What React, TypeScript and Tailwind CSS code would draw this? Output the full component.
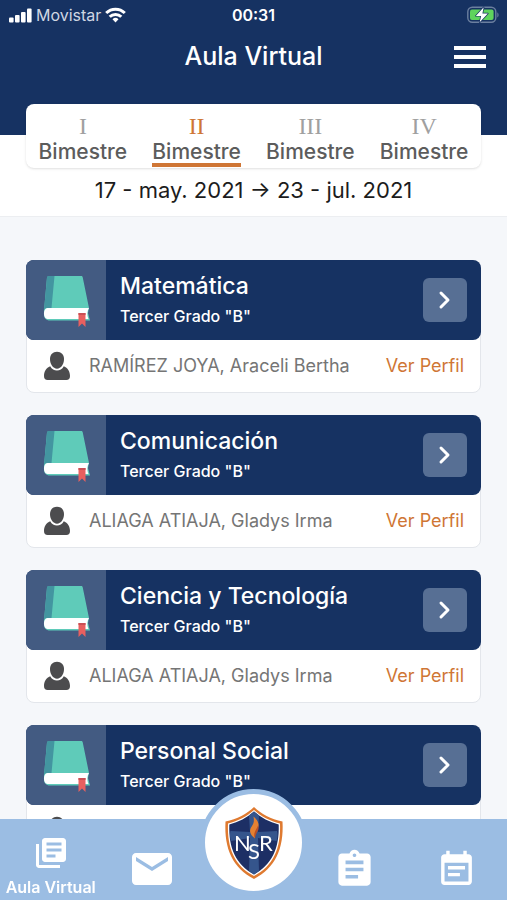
import { useState } from "react"
import { MdAssignment, MdEmail, MdEventNote, MdLibraryBooks } from "react-icons/md"

const periods = ["I", "II", "III", "IV"]

const courses = [
  { name: "Matemática", grade: 'Tercer Grado "B"', teacher: "RAMÍREZ JOYA, Araceli Bertha" },
  { name: "Comunicación", grade: 'Tercer Grado "B"', teacher: "ALIAGA ATIAJA, Gladys Irma" },
  { name: "Ciencia y Tecnología", grade: 'Tercer Grado "B"', teacher: "ALIAGA ATIAJA, Gladys Irma" },
  { name: "Personal Social", grade: 'Tercer Grado "B"', teacher: "ALIAGA ATIAJA, Gladys Irma" },
]

type Course = (typeof courses)[number]

function SignalIcon() {
  return (
    <svg width="24" height="15" viewBox="0 0 24 15" fill="currentColor" aria-hidden="true">
      <rect x="1" y="9.5" width="4.600" height="5" rx="1" />
      <rect x="7" y="7" width="4.600" height="7.5" rx="1" />
      <rect x="13" y="4" width="4.600" height="10.5" rx="1" />
      <rect x="19" y="0.500" width="4.600" height="14" rx="1" />
    </svg>
  )
}

function WifiIcon() {
  return (
    <svg width="21" height="16" viewBox="0 0 21 16" fill="none" stroke="currentColor" strokeWidth="3" aria-hidden="true">
      <path d="M1.200 6a13.200 13.200 0 0 1 18.600 0" />
      <path d="M4.700 9.800a8.300 8.300 0 0 1 11.600 0" />
      <path d="M10.500 15.400l-3-3.200a4.300 4.300 0 0 1 6 0z" fill="currentColor" stroke="none" />
    </svg>
  )
}

function BatteryIcon() {
  return (
    <svg width="34" height="18" viewBox="0 0 34 18" aria-hidden="true">
      <rect x="2.800" y="1.300" width="28" height="15" rx="4.500" fill="none" stroke="#6b7f9f" strokeWidth="1.400" />
      <rect x="5" y="3.500" width="23.600" height="10.600" rx="2" fill="#5fd35d" />
      <path d="M32.300 6.500c1.700.6 1.700 4.300 0 5z" fill="#6b7f9f" />
      <path
        d="M18.700 1.300 10.800 9.900h5.300l-1.400 6.300 8.200-8.700h-5.500z"
        fill="#fff"
        stroke="#163262"
        strokeWidth="1.400"
        strokeLinejoin="round"
        paintOrder="stroke"
      />
    </svg>
  )
}

function BookIcon() {
  return (
    <svg width="48" height="54" viewBox="0 0 48 54" aria-hidden="true">
      <path d="M7 3h32c1 0 1.500.4 1.700 1.300L47 35l-1 5 2 7.500H8c-4 0-6-2.500-6-6v-4L5 4.600C5.200 3.600 6 3 7 3z" fill="#5fcbb9" />
      <path d="M7 3h5.500L9.500 35H5c-1.500.2-2.500 1-3 2.500L5 4.600C5.200 3.600 6 3 7 3z" fill="#4395a0" />
      <path d="M5.500 35H47c-2 3-2.200 7.500-.500 11h-41C.8 46 .8 35 5.500 35z" fill="#fff" />
      <path d="M36.500 40h7v14L40 50.500 36.500 54z" fill="#e8605f" />
      <path d="M36.500 40h7v2h-7z" fill="#c95055" />
    </svg>
  )
}

function PersonIcon() {
  return (
    <svg width="28" height="30" viewBox="0 0 28 30" fill="#4c4c4e" aria-hidden="true">
      <path d="M14 .8c4.200 0 7 2.900 7 7.300 0 5.200-3 9.600-7 9.600S7 13.300 7 8.100C7 3.700 9.800.8 14 .8z" />
      <path d="M7.200 15.200c1.600 2.900 4 4.300 6.800 4.300s5.200-1.400 6.800-4.300c3.900 1.700 6.200 5 6.200 9.800 0 2.700-1.200 4-3.700 4H4.700C2.200 29 1 27.700 1 25c0-4.800 2.300-8.100 6.200-9.800z" />
    </svg>
  )
}

function SchoolBadge() {
  return (
    <svg width="60" height="74" viewBox="0 0 60 74" aria-hidden="true">
      <path d="M30 1c7 7 17 12 28.500 14.500C60 43 51 62 30 73 9 62 0 43 1.500 15.500 13 13 23 8 30 1z" fill="#df7a30" />
      <path d="M30 4c7 6.500 16 11 26 13.500C57 43 49 60 30 70 11 60 3 43 4 17.500 14 15 23 10.500 30 4z" fill="#fff" />
      <path d="M30 5.500c7 6.200 15.500 10.500 24.700 13C55.500 42.500 48 58.500 30 68.500 12 58.500 4.500 42.500 5.300 18.500 14.500 16 23 11.700 30 5.500z" fill="#1d2f65" />
      <path d="M25 9.500l5-4 5 4-1 16.500 19-1c1 3 .5 7-.500 10L34 32l1 33-5 3.500-5-3.500 1-33-19 3c-1-3-1.500-7-.500-10L26 26z" fill="#35558c" />
      <path d="M29.500 10.500c5.500 5 6.500 9 3.500 13.500-1.800 2.700-2.400 5-2 8.500-5.800-4.500-6-8.500-3-12.500 2-2.900 2.300-5.500 1.500-9.500z" fill="#e58132" />
      <path d="M34 19.500c2.200 4.500-2.300 6.500-3 13-2.200-5.500.8-7.500 3-13z" fill="#bb4f27" />
      <text fill="#fff" fontFamily="Lato, sans-serif" fontSize="22">
        <tspan x="10" y="45">N</tspan>
        <tspan x="24" y="53">S</tspan>
        <tspan x="35" y="45">R</tspan>
      </text>
    </svg>
  )
}

function CourseCard({ course }: { course: Course }) {
  return (
    <article className="rounded-lg border border-[#e3e6eb] bg-white">
      <div className="-mx-px -mt-px flex h-20 items-center overflow-hidden rounded-lg bg-[#163262] text-white">
        <div className="flex h-20 w-20 shrink-0 items-center justify-center bg-[#435b82]">
          <BookIcon />
        </div>
        <div className="min-w-0 flex-1 pl-[14px]">
          <h2 className="text-[23px] leading-7 font-medium">{course.name}</h2>
          <p className="mt-1 text-base leading-6 font-medium">{course.grade}</p>
        </div>
        <button
          type="button"
          aria-label={course.name}
          className="mr-[14px] flex h-11 w-11 shrink-0 items-center justify-center rounded-md bg-[#576f94]"
        >
          <svg width="14" height="20" viewBox="0 0 14 20" fill="none" stroke="currentColor" strokeWidth="3" strokeLinecap="round" strokeLinejoin="round">
            <path d="M3 3l7 7-7 7" />
          </svg>
        </button>
      </div>
      <div className="flex h-[52px] items-center px-4">
        <PersonIcon />
        <p className="flex-1 pl-[18px] text-lg text-[#757575]">{course.teacher}</p>
        <a href="#perfil" className="text-lg text-[#cf7635]">
          Ver Perfil
        </a>
      </div>
    </article>
  )
}

export default function App() {
  const [active, setActive] = useState("II")

  return (
    <div className="flex h-screen flex-col overflow-hidden bg-[#f5f7fa] font-[Inter,sans-serif]">
      <header className="h-[135px] shrink-0 bg-[#163262] text-white">
        <div className="grid h-[30px] grid-cols-3 items-center px-2">
          <div className="flex items-center gap-1">
            <SignalIcon />
            <span className="text-base text-[#d0d7e3]">Movistar</span>
            <WifiIcon />
          </div>
          <span className="text-center text-base font-semibold">00:31</span>
          <div className="flex justify-end">
            <BatteryIcon />
          </div>
        </div>
        <div className="grid h-[54px] grid-cols-[1fr_auto_1fr] items-center px-5">
          <h1 className="col-start-2 text-[25px] font-medium">Aula Virtual</h1>
          <button type="button" aria-label="Menú" className="justify-self-end">
            <svg width="34" height="24" viewBox="0 0 34 24" fill="currentColor">
              <path d="M1 1h32v4H1zM1 10h32v4H1zM1 19h32v4H1z" />
            </svg>
          </button>
        </div>
      </header>

      <section className="shrink-0 border-b border-[#eceef1] bg-white px-[26px]">
        <div className="-mt-[31px] grid h-16 grid-cols-4 rounded-lg bg-white shadow-sm">
          {periods.map((period) => (
            <button key={period} type="button" onClick={() => setActive(period)} className="flex flex-col items-center pt-2">
              <span
                className={`font-[Liberation_Serif,serif] text-2xl leading-7 ${active === period ? "text-[#cf7635]" : "text-[#a0a0a0]"}`}
              >
                {period}
              </span>
              <span
                className={`border-b-4 text-[21px] leading-[23px] font-medium text-[#5c5c5c] ${active === period ? "border-[#cf7635]" : "border-transparent"}`}
              >
                Bimestre
              </span>
            </button>
          ))}
        </div>
        <p className="pt-1 pb-2 text-center text-[22px] leading-9 text-[#1c1c1c]">17 - may. 2021 → 23 - jul. 2021</p>
      </section>

      <main className="flex min-h-0 flex-1 flex-col gap-[22px] overflow-y-auto px-[26px] pt-[43px] [scrollbar-width:none]">
        {courses.map((course) => (
          <CourseCard key={course.name} course={course} />
        ))}
      </main>

      <nav className="fixed inset-x-0 bottom-0 grid h-[81px] grid-cols-5 bg-[#9bbde3] text-white">
        <a href="#aula" className="flex flex-col items-center pt-4 text-base leading-8 font-semibold whitespace-nowrap">
          <MdLibraryBooks size={36} />
          Aula Virtual
        </a>
        <a href="#mensajes" aria-label="Mensajes" className="flex items-center justify-center pt-4">
          <MdEmail size={48} />
        </a>
        <a href="#inicio" aria-label="Inicio" className="flex justify-center">
          <span className="-mt-[30px] flex h-[107px] w-[107px] shrink-0 items-center justify-center rounded-full border-[5px] border-[#9bbde3] bg-white">
            <SchoolBadge />
          </span>
        </a>
        <a href="#tareas" aria-label="Tareas" className="flex items-center justify-center pt-4">
          <MdAssignment size={43} />
        </a>
        <a href="#agenda" aria-label="Agenda" className="flex items-center justify-center pt-4">
          <MdEventNote size={41} />
        </a>
      </nav>
    </div>
  )
}
